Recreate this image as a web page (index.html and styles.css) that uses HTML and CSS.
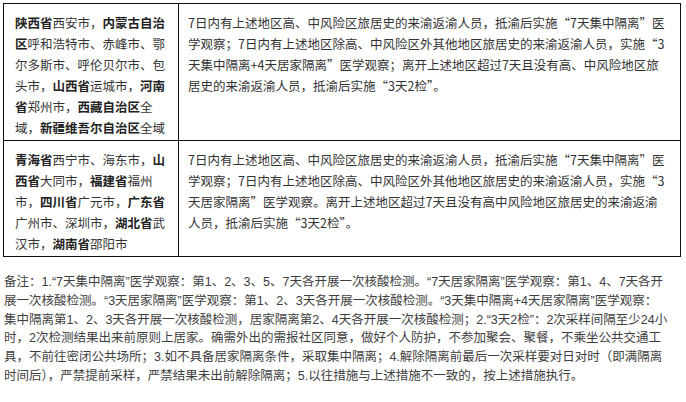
FILE: index.html
```html
<!DOCTYPE html>
<html lang="zh-CN">
<head>
<meta charset="utf-8">
<title>来渝返渝人员管控措施</title>
<link rel="stylesheet" href="styles.css">
</head>
<body>
<div class="page">
  <table class="policy">
    <colgroup>
      <col class="col-area">
      <col class="col-measure">
    </colgroup>
    <tbody>
      <tr>
        <td class="area"><b>陕西省</b>西安市，<b>内蒙古自治区</b>呼和浩特市、赤峰市、鄂尔多斯市、呼伦贝尔市、包头市，<b>山西省</b>运城市，<b>河南省</b>郑州市，<b>西藏自治区</b>全域，<b>新疆维吾尔自治区</b>全域</td>
        <td class="measure">7日内有上述地区高、中风险区旅居史的来渝返渝人员，抵渝后实施“7天集中隔离”医学观察；7日内有上述地区除高、中风险区外其他地区旅居史的来渝返渝人员，实施“3天集中隔离+4天居家隔离”医学观察；离开上述地区超过7天且没有高、中风险地区旅居史的来渝返渝人员，抵渝后实施“3天2检”。</td>
      </tr>
      <tr>
        <td class="area"><b>青海省</b>西宁市、海东市，<b>山西省</b>大同市，<b>福建省</b>福州市，<b>四川省</b>广元市，<b>广东省</b>广州市、深圳市，<b>湖北省</b>武汉市，<b>湖南省</b>邵阳市</td>
        <td class="measure">7日内有上述地区高、中风险区旅居史的来渝返渝人员，抵渝后实施“7天集中隔离”医学观察；7日内有上述地区除高、中风险区外其他地区旅居史的来渝返渝人员，实施“3天居家隔离”医学观察。离开上述地区超过7天且没有高中风险地区旅居史的来渝返渝人员，抵渝后实施“3天2检”。</td>
      </tr>
    </tbody>
  </table>
  <p class="notes">备注：1.“7天集中隔离”医学观察：第1、2、3、5、7天各开展一次核酸检测。“7天居家隔离”医学观察：第1、4、7天各开展一次核酸检测。“3天居家隔离”医学观察：第1、2、3天各开展一次核酸检测。“3天集中隔离+4天居家隔离”医学观察：集中隔离第1、2、3天各开展一次核酸检测，居家隔离第2、4天各开展一次核酸检测；2.“3天2检”：2次采样间隔至少24小时，2次检测结果出来前原则上居家。确需外出的需报社区同意，做好个人防护，不参加聚会、聚餐，不乘坐公共交通工具，不前往密闭公共场所；3.如不具备居家隔离条件，采取集中隔离；4.解除隔离前最后一次采样要对日对时（即满隔离时间后），严禁提前采样，严禁结果未出前解除隔离；5.以往措施与上述措施不一致的，按上述措施执行。</p>
</div>
</body>
</html>
```
FILE: styles.css
```css
html, body {
  margin: 0;
  padding: 0;
  background: #fff;
}

.page {
  padding: 3px 0 0 3px;
  width: 677px;
}

.policy {
  border-collapse: collapse;
  table-layout: fixed;
  width: 677px;
  font-family: "Noto Sans CJK SC", sans-serif;
  font-size: 12.5px;
  line-height: 21px;
  color: #333;
}

.col-area { width: 175px; }
.col-measure { width: 502px; }

.policy td {
  border: 1px solid #111;
  vertical-align: top;
  padding: 8px 9px 2px 9px;
}

.policy td.area {
  padding-left: 11px;
  padding-right: 11px;
}

.policy td.measure {
  padding-left: 9px;
  padding-right: 11px;
}

.policy b {
  font-weight: bold;
  color: #222;
}

.notes {
  margin: 16px 0 0 1px;
  width: 664px;
  font-family: "Liberation Sans", "Noto Sans CJK SC", sans-serif;
  font-size: 12.5px;
  line-height: 18.8px;
  color: #3e3e3e;
}
```
